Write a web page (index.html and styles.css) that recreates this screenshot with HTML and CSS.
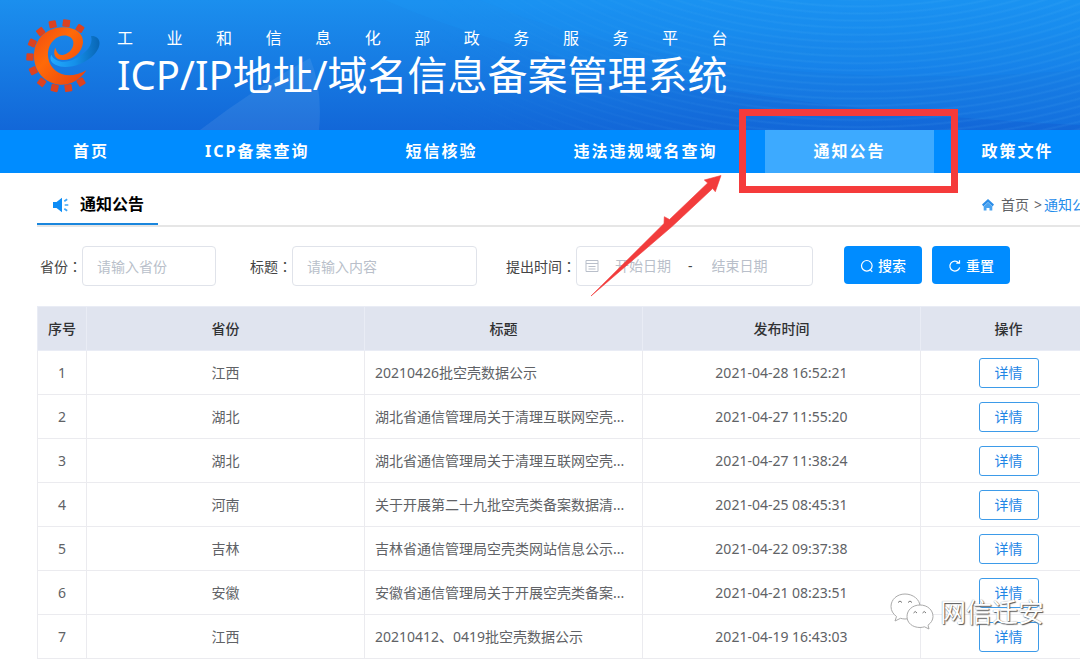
FILE: index.html
```html
<!DOCTYPE html>
<html lang="zh-CN">
<head>
<meta charset="utf-8">
<title>ICP/IP地址/域名信息备案管理系统</title>
<link rel="stylesheet" href="styles.css">
</head>
<body>
<header class="banner">
  <svg class="banner-shapes" viewBox="0 0 1080 130" preserveAspectRatio="xMinYMin slice" aria-hidden="true">
    <path d="M200 130Q255 88 310 58Q323 90 319 130Z" fill="#fff" opacity=".08"/>
    <path d="M385 0C520 60 760 110 1080 125V0Z" fill="#1aa0ff" opacity=".14"/>
    <path d="M480 0C620 60 830 90 1080 70V0Z" fill="#1aa0ff" opacity=".12"/>
  </svg>
  <div class="banner-waves"></div>
  <svg class="logo" viewBox="0 0 300 285" aria-hidden="true">
    <defs>
      <linearGradient id="flame" x1="0" y1="0" x2="1" y2="1"><stop offset="0" stop-color="#f04a12"/><stop offset=".4" stop-color="#ff6a08"/><stop offset="1" stop-color="#e8400f"/></linearGradient>
      <linearGradient id="swoosh"><stop offset="0" stop-color="#22aaff"/><stop offset=".5" stop-color="#1590ea"/><stop offset="1" stop-color="#0865b4"/></linearGradient>
    </defs>
    <g fill="#dc4220">
      <rect x="184" y="45" width="22" height="21" rx="3" transform="rotate(32 195 55)"/>
      <rect x="143" y="29" width="22" height="22" rx="3" transform="rotate(8 154 40)"/>
      <rect x="102" y="32" width="22" height="22" rx="3" transform="rotate(-12 113 43)"/>
      <rect x="66" y="54" width="22" height="22" rx="3" transform="rotate(-38 77 65)"/>
      <rect x="41" y="88" width="22" height="22" rx="3" transform="rotate(-66 52 99)"/>
      <rect x="34" y="130" width="22" height="22" rx="3" transform="rotate(3 45 141)"/>
      <rect x="44" y="171" width="22" height="22" rx="3" transform="rotate(-26 55 182)"/>
      <rect x="69" y="206" width="22" height="22" rx="3" transform="rotate(-52 80 217)"/>
      <rect x="108" y="223" width="22" height="22" rx="3" transform="rotate(12 119 234)"/>
      <rect x="149" y="223" width="22" height="22" rx="3" transform="rotate(-8 160 234)"/>
      <rect x="187" y="205" width="22" height="22" rx="3" transform="rotate(-32 198 216)"/>
    </g>
    <path d="M214 181C194 212 164 226 135 224C90 220 57 185 57 138C57 88 95 52 145 52C182 52 206 72 204 98C201 128 172 150 145 150C122 150 112 134 121 113C125 126 130 138 146 134C165 129 177 112 175 95C171 77 150 72 131 80C107 91 95 118 100 145C108 190 158 213 214 181Z" fill="url(#flame)"/>
    <path d="M109 134C120 158 152 160 178 147C214 130 236 105 228 78C256 76 264 106 237 134C207 165 152 180 123 165C107 157 103 146 109 134Z" fill="url(#swoosh)"/>
  </svg>
  <div class="brand">
    <p class="brand-sub">工业和信息化部政务服务平台</p>
    <h1 class="brand-title">ICP/IP地址/域名信息备案管理系统</h1>
  </div>
</header>

<nav class="nav">
  <a class="nav-item" href="#">首页</a>
  <a class="nav-item" href="#">ICP备案查询</a>
  <a class="nav-item" href="#">短信核验</a>
  <a class="nav-item" href="#">违法违规域名查询</a>
  <a class="nav-item nav-item-active" href="#">通知公告</a>
  <a class="nav-item" href="#">政策文件</a>
</nav>

<main class="content">
  <div class="section-head">
    <h2 class="section-title">
      <svg class="icon" viewBox="0 0 16 16" aria-hidden="true"><path d="M0 5h3.500L9 0.800v14.400L3.500 11H0z" fill="#0d8cf5"/><path d="M11.300 4.200l2.900-2M11.700 8h3.600M11.300 11.800l2.900 2" stroke="#3da5f8" stroke-width="1.700"/></svg>
      通知公告
    </h2>
    <div class="crumbs">
      <svg class="crumb-icon" viewBox="0 0 12 12" aria-hidden="true"><path d="M6 0L12 5.600L10.600 7.400L6 3.200L1.400 7.400L0 5.600z" fill="#2b8de8"/><path d="M6 3.600L10.300 7.500V11.500H7.500V9H4.500V11.500H1.700V7.500z" fill="#4aa3f0"/></svg>
      <a class="crumb" href="#">首页</a><span class="crumb-sep">&gt;</span><a class="crumb crumb-current" href="#">通知公告</a>
    </div>
  </div>

  <form class="filters">
    <div class="field field-province"><label for="province">省份<span class="colon" lang="zh-TW">：</span></label><input class="box" id="province" type="text" placeholder="请输入省份"></div>
    <div class="field field-title"><label for="title">标题<span class="colon" lang="zh-TW">：</span></label><input class="box" id="title" type="text" placeholder="请输入内容"></div>
    <div class="field field-date"><label for="start">提出时间<span class="colon" lang="zh-TW">：</span></label>
      <div class="box range">
        <svg class="range-icon" viewBox="0 0 14 14" fill="none" stroke="#b9bfca" aria-hidden="true"><path d="M1 1.500h12v11H1zM1 4.500h12M3.500 7.500h7M3.500 10h7"/></svg>
        <input class="range-input" id="start" type="text" placeholder="开始日期">
        <span>-</span>
        <input class="range-input" type="text" placeholder="结束日期" aria-label="结束日期">
      </div>
    </div>
    <div class="actions">
      <button class="btn" type="button"><svg class="btn-icon" viewBox="0 0 14 14" fill="none" stroke="#fff" stroke-width="1.200" aria-hidden="true"><circle cx="6.800" cy="6.800" r="5.300"/><path d="M10 10.500l2.300 2.300"/></svg>搜索</button>
      <button class="btn" type="button"><svg class="btn-icon" viewBox="0 0 14 14" fill="none" stroke="#fff" stroke-width="1.200" aria-hidden="true"><path d="M11.700 8.500A5 5 0 1 1 10.500 3.600M8.300 4.200h3.200V1.200"/></svg>重置</button>
    </div>
  </form>

  <table class="table">
    <thead>
      <tr><th class="col-no">序号</th><th>省份</th><th>标题</th><th>发布时间</th><th class="col-op">操作</th></tr>
    </thead>
    <tbody>
      <tr><td>1</td><td>江西</td><td class="cell-title">20210426批空壳数据公示</td><td>2021-04-28 16:52:21</td><td><button class="detail" type="button">详情</button></td></tr>
      <tr><td>2</td><td>湖北</td><td class="cell-title">湖北省通信管理局关于清理互联网空壳...</td><td>2021-04-27 11:55:20</td><td><button class="detail" type="button">详情</button></td></tr>
      <tr><td>3</td><td>湖北</td><td class="cell-title">湖北省通信管理局关于清理互联网空壳...</td><td>2021-04-27 11:38:24</td><td><button class="detail" type="button">详情</button></td></tr>
      <tr><td>4</td><td>河南</td><td class="cell-title">关于开展第二十九批空壳类备案数据清...</td><td>2021-04-25 08:45:31</td><td><button class="detail" type="button">详情</button></td></tr>
      <tr><td>5</td><td>吉林</td><td class="cell-title">吉林省通信管理局空壳类网站信息公示...</td><td>2021-04-22 09:37:38</td><td><button class="detail" type="button">详情</button></td></tr>
      <tr><td>6</td><td>安徽</td><td class="cell-title">安徽省通信管理局关于开展空壳类备案...</td><td>2021-04-21 08:23:51</td><td><button class="detail" type="button">详情</button></td></tr>
      <tr><td>7</td><td>江西</td><td class="cell-title">20210412、0419批空壳数据公示</td><td>2021-04-19 16:43:03</td><td><button class="detail" type="button">详情</button></td></tr>
    </tbody>
  </table>
</main>

<div class="mark-box"></div>
<svg class="mark-arrow" viewBox="0 0 134 124" aria-hidden="true"><path d="M1 121L74 48.500L74.300 41.700L79.500 44.500L117.700 8L114.300 5L131 0.500L125.300 16.700L122.700 13.500L82 51.500Z" fill="#f23c3c" stroke="#f23c3c" stroke-width=".6"/></svg>
<div class="watermark">
  <svg class="watermark-icon" viewBox="0 0 44 38" fill="#fff" stroke="#aaa" aria-hidden="true">
    <path d="M15 1C7 1 1 6.500 1 13.500C1 17.500 3 21 6.500 23.500L5 28L10.500 25.300C12 25.700 13.500 26 15 26C23 26 30 20.500 30 13.500S23 1 15 1z"/>
    <path d="M30 12C22.500 12 17 17 17 23.500S22.500 34.500 30 34.500C31.500 34.500 33 34.200 34.500 33.800L39 36L38 32.200C41 30 43 27 43 23.500C43 17 37.500 12 30 12z"/>
    <path d="M8 9.500q2-3 4 0M18 9.500q2-3 4 0M23.500 20q1.700-3 3.500 0M32.500 20q1.700-3 3.500 0" fill="none" stroke="#777"/>
  </svg>
  <span>网信迁安</span>
</div>
</body>
</html>
```

FILE: styles.css
```css
* { box-sizing: border-box; }

body {
  position: relative;
  margin: 0;
  min-height: 100vh;
  overflow: hidden;
  background: #fff;
  color: #606266;
  font: 14px/20px "Noto Sans", "Noto Sans CJK SC", sans-serif;
}

a { color: inherit; text-decoration: none; }

button, input { font: inherit; }

.banner {
  position: relative;
  display: flex;
  gap: 2px;
  height: 130px;
  padding: 10px 15px;
  overflow: hidden;
  background: linear-gradient(#1b8fee, #1267d8);
  color: #fff;
}

.banner-shapes, .banner-waves {
  position: absolute;
  inset: 0;
  width: 100%;
  height: 100%;
}

.banner-waves {
  background: repeating-radial-gradient(ellipse 620px 400px at 860px -240px, transparent 0, transparent 5px, rgba(110, 200, 255, .1) 8px, transparent 11px);
  mask-image: linear-gradient(90deg, transparent 40%, #000 75%);
}

.logo { position: relative; flex: none; width: 100px; height: 95px; }

.brand { position: relative; padding-top: 16px; }

.brand-sub {
  margin: 0;
  font-size: 16px;
  line-height: 24px;
  text-align: justify;
  text-align-last: justify;
}

.brand-title {
  margin: 0;
  font-size: 40px;
  font-weight: 400;
  line-height: 50px;
  white-space: nowrap;
}

.nav {
  display: flex;
  padding-left: 25px;
  background: #008cff;
  color: #fff;
}

.nav-item {
  flex: none;
  padding: 0 48px;
  font-size: 16px;
  font-weight: 700;
  line-height: 43px;
  letter-spacing: 2px;
}

.nav-item-active { background: #3daaff; }

.content { margin-right: -20px; padding: 13px 0 0 37px; }

.section-head {
  display: flex;
  justify-content: space-between;
  align-items: flex-start;
  border-bottom: 2px solid #e6e6e6;
}

.section-title {
  display: flex;
  align-items: center;
  gap: 11px;
  margin: 0;
  padding: 0 14px 0 16px;
  border-bottom: 2px solid #1a86dd;
  color: #000;
  font-size: 16px;
  line-height: 37px;
}

.icon { width: 16px; height: 16px; }

.crumbs { display: flex; align-items: center; line-height: 38px; }

.crumb-icon { width: 12px; height: 12px; margin-right: 7px; }

.crumb-sep { margin: 0 2px 0 5px; }

.crumb-current { color: #1f8ceb; }

.filters {
  display: flex;
  align-items: flex-start;
  padding: 19px 0 20px 3px;
  color: #444;
}

.field { display: flex; align-items: center; white-space: nowrap; }

.field-province { width: 176px; margin-right: 34px; }

.field-title { width: 227px; margin-right: 29px; }

.field-date { width: 307px; margin-right: 31px; }

.colon { font-family: "Noto Sans CJK TC", sans-serif; }

.box {
  flex: 1;
  min-width: 0;
  height: 40px;
  padding: 0 14px;
  border: 1px solid #e0e3ea;
  border-radius: 4px;
  background: #fff;
}

input::placeholder { color: #b9bfca; opacity: 1; }

.range { display: flex; align-items: center; padding: 0 8px; }

.range-icon { width: 14px; height: 14px; margin-right: 16px; }

.range-input {
  width: 73px;
  padding: 0;
  border: 0;
  background: none;
}

.range span { margin-right: 19px; }

.actions { display: flex; gap: 10px; }

.btn {
  display: flex;
  align-items: center;
  justify-content: center;
  gap: 4px;
  width: 78px;
  height: 38px;
  padding: 2px 0 0;
  border: 0;
  border-radius: 4px;
  background: #008cff;
  color: #fff;
  font-weight: 500;
}

.btn-icon { width: 14px; height: 14px; }

.table {
  width: calc(100% - 3px);
  border-collapse: collapse;
  table-layout: fixed;
}

.table th, .table td {
  height: 44px;
  padding: 0 10px;
  border: 1px solid #ebebef;
  text-align: center;
  font-weight: 400;
}

.table th {
  border-color: #e9ecf5;
  background: #e0e4ef;
  color: #303133;
  font-weight: 500;
}

.table .col-no { width: 49px; padding: 0; }

.col-op { width: 176px; }

.table .cell-title { overflow: hidden; text-align: left; white-space: nowrap; }

.detail {
  width: 60px;
  height: 30px;
  padding: 0;
  border: 1px solid #3d9be9;
  border-radius: 3px;
  background: #fff;
  color: #1f86e5;
  vertical-align: middle;
}

/* Annotations lie over the page */
.mark-box {
  position: absolute;
  top: 109px;
  left: 739px;
  width: 219px;
  height: 84px;
  border: 7px solid #f53b3b;
}

.mark-arrow {
  position: absolute;
  top: 175px;
  left: 590px;
  width: 134px;
  height: 124px;
}

.watermark {
  position: absolute;
  top: 592px;
  left: 890px;
  display: flex;
  align-items: center;
  gap: 6px;
  color: #fff;
  font-size: 26px;
  line-height: 40px;
  text-shadow: 1px 1px 1px #555, 0 0 1px #888;
}

.watermark-icon { width: 44px; height: 38px; }
```
